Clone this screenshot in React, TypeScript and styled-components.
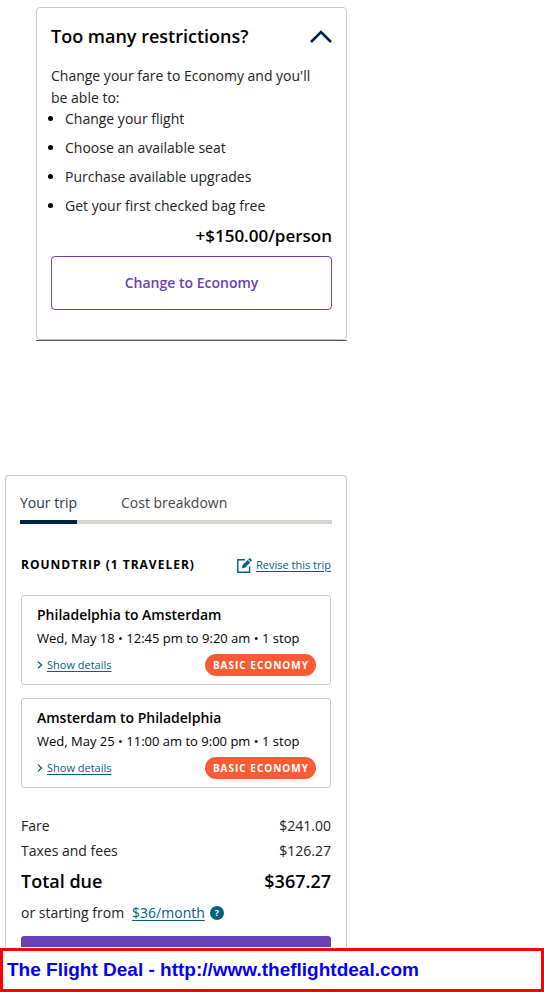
import React from "react";
import styled, { createGlobalStyle } from "styled-components";

const GlobalStyle = createGlobalStyle`
  *, *::before, *::after { box-sizing: border-box; }
  body {
    margin: 0;
    background: #fff;
    color: #222;
    font-family: "Open Sans", "Noto Sans", sans-serif;
    font-size: 14px;
    line-height: 22px;
  }
  h2, h3, p, ul, dl, dd { margin: 0; padding: 0; }
  button { font: inherit; cursor: pointer; }
`;

const Column = styled.main`
  width: 100%;
  max-width: 347px;
  padding: 7px 0 1px 5px;
`;

const OfferShell = styled.section`
  margin: 0 0 134px 31px;
  border-bottom: 1px solid #555;
`;

const OfferCard = styled.div`
  border: 1px solid #c8c8c8;
  border-radius: 4px;
  padding: 14px 14px 29px;
`;

const OfferHeader = styled.div`
  display: flex;
  align-items: center;
  justify-content: space-between;
  height: 28px;
  margin-bottom: 15px;
`;

const OfferTitle = styled.h2`
  color: #000;
  font-size: 18px;
  font-weight: 600;
`;

const CollapseButton = styled.button`
  display: flex;
  padding: 0;
  border: 0;
  background: none;
`;

const OfferText = styled.p`
  padding-right: 12px;
`;

const PerkList = styled.ul`
  padding-left: 14px;

  li { line-height: 20px; margin-bottom: 9px; }
  li::marker { color: #000; }
`;

const OfferPrice = styled.p`
  color: #000;
  font-size: 17px;
  font-weight: 600;
  text-align: right;
`;

const OutlineButton = styled.button`
  width: 100%;
  height: 54px;
  margin-top: 9px;
  border: 1px solid #6841b4;
  border-radius: 4px;
  background: #fff;
  color: #6841b4;
  font-weight: 600;
`;

const TripCard = styled.section`
  border: 1px solid #c8c8c8;
  border-bottom: 0;
  border-radius: 4px 4px 0 0;
  padding: 16px 14px 0;
`;

const Tabs = styled.div`
  display: flex;
  gap: 44px;
  border-bottom: 4px solid #d3d3cf;
`;

const Tab = styled.button<{ $active?: boolean }>`
  padding: 0 0 6px;
  margin-bottom: -4px;
  border: 0;
  border-bottom: 4px solid ${(p) => (p.$active ? "#002244" : "transparent")};
  background: none;
  color: ${(p) => (p.$active ? "#243746" : "#444")};
`;

const TripBody = styled.div`
  padding: 30px 1px 0;
`;

const TripHeader = styled.div`
  display: flex;
  align-items: center;
  justify-content: space-between;
  margin-bottom: 19px;
`;

const TripTitle = styled.h2`
  color: #000;
  font-size: 12px;
  font-weight: 700;
  letter-spacing: 1px;
`;

const TextLink = styled.a`
  color: #00627a;
  text-underline-offset: 2px;
`;

const SmallLink = styled(TextLink)`
  font-size: 11px;
`;

const IconLabel = styled.span`
  display: flex;
  align-items: center;
  gap: 4px;
`;

const Flight = styled.article`
  height: 90px;
  margin-bottom: 13px;
  padding: 8px 14px 0 15px;
  border: 1px solid #c8c8c8;
  border-radius: 3px;
`;

const FlightTitle = styled.h3`
  color: #000;
  font-size: 14px;
  font-weight: 600;
`;

const FlightInfo = styled.p`
  color: #000;
  font-size: 13px;
  line-height: 24px;
`;

const FlightFooter = styled.div`
  display: flex;
  align-items: center;
  justify-content: space-between;
  margin-top: 4px;
`;

const FareBadge = styled.span`
  padding: 0 7px 0 8px;
  border-radius: 11px;
  background: #f95c35;
  color: #fff;
  font-size: 10px;
  font-weight: 700;
  letter-spacing: 1px;
`;

const Costs = styled.dl`
  padding-top: 12px;
`;

const CostRow = styled.div<{ $total?: boolean }>`
  display: flex;
  justify-content: space-between;
  color: ${(p) => (p.$total ? "#000" : "#222")};
  font-size: ${(p) => (p.$total ? 18 : 14)}px;
  font-weight: ${(p) => (p.$total ? 600 : 400)};
  line-height: ${(p) => (p.$total ? 36 : 25)}px;
`;

const Monthly = styled.p`
  display: flex;
  align-items: center;
  gap: 8px;
  margin: 3px 0 12px;
`;

const HelpButton = styled.button`
  width: 14px;
  height: 14px;
  margin-left: -3px;
  padding: 0;
  border: 0;
  border-radius: 50%;
  background: #00627a;
  color: #fff;
  font-size: 9px;
  font-weight: 700;
  line-height: 14px;
`;

const ContinueButton = styled.button`
  display: block;
  width: 100%;
  height: 11px;
  padding: 0;
  border: 0;
  border-radius: 3px 3px 0 0;
  background: #6841b4;
`;

const SiteBanner = styled.footer`
  padding: 7px 4px;
  border: 3px solid #f00;
  background: #fff;
  font: bold 19px/24px "Liberation Sans", Arial, sans-serif;

  a { color: #00f; text-decoration: none; }
`;

const perks = [
  "Change your flight",
  "Choose an available seat",
  "Purchase available upgrades",
  "Get your first checked bag free",
];

const flights = [
  { route: "Philadelphia to Amsterdam", info: "Wed, May 18 • 12:45 pm to 9:20 am • 1 stop" },
  { route: "Amsterdam to Philadelphia", info: "Wed, May 25 • 11:00 am to 9:00 pm • 1 stop" },
];

const costs = [
  { label: "Fare", value: "$241.00" },
  { label: "Taxes and fees", value: "$126.27" },
  { label: "Total due", value: "$367.27", total: true },
];

const ChevronUp = () => (
  <svg width="22" height="13" viewBox="0 0 22 13" fill="none" aria-hidden="true">
    <path d="M1 12 11 2l10 10" stroke="#002244" strokeWidth="2.6" />
  </svg>
);

const ChevronRight = () => (
  <svg width="6" height="8" viewBox="0 0 6 8" fill="none" aria-hidden="true">
    <path d="m1 .7 3.6 3.3L1 7.3" stroke="#00627a" strokeWidth="1.2" />
  </svg>
);

const EditIcon = () => (
  <svg width="15" height="15" viewBox="0 0 15 15" fill="none" aria-hidden="true">
    <path d="M8 1.7H.8v12.5h11.8V8.5" stroke="#00627a" strokeWidth="1.4" />
    <path d="M4.8 10.5 5.7 7l5-5 2.5 2.5-5 5z" fill="#00627a" />
    <path d="m11.3 1.4 1-1q.5-.4 1 0l1.4 1.4q.4.5 0 1l-1 1z" fill="#00627a" />
  </svg>
);

export default function App() {
  return (
    <>
      <GlobalStyle />
      <Column>
        <OfferShell>
          <OfferCard>
            <OfferHeader>
              <OfferTitle>Too many restrictions?</OfferTitle>
              <CollapseButton type="button" aria-label="Collapse" aria-expanded="true">
                <ChevronUp />
              </CollapseButton>
            </OfferHeader>
            <OfferText>Change your fare to Economy and you'll be able to:</OfferText>
            <PerkList>
              {perks.map((perk) => (
                <li key={perk}>{perk}</li>
              ))}
            </PerkList>
            <OfferPrice>+$150.00/person</OfferPrice>
            <OutlineButton type="button">Change to Economy</OutlineButton>
          </OfferCard>
        </OfferShell>

        <TripCard>
          <Tabs role="tablist">
            <Tab type="button" role="tab" aria-selected="true" $active>
              Your trip
            </Tab>
            <Tab type="button" role="tab" aria-selected="false">
              Cost breakdown
            </Tab>
          </Tabs>
          <TripBody>
            <TripHeader>
              <TripTitle>ROUNDTRIP (1 TRAVELER)</TripTitle>
              <IconLabel>
                <EditIcon />
                <SmallLink href="#revise">Revise this trip</SmallLink>
              </IconLabel>
            </TripHeader>
            {flights.map((flight) => (
              <Flight key={flight.route}>
                <FlightTitle>{flight.route}</FlightTitle>
                <FlightInfo>{flight.info}</FlightInfo>
                <FlightFooter>
                  <IconLabel>
                    <ChevronRight />
                    <SmallLink href="#details">Show details</SmallLink>
                  </IconLabel>
                  <FareBadge>BASIC ECONOMY</FareBadge>
                </FlightFooter>
              </Flight>
            ))}
            <Costs>
              {costs.map((cost) => (
                <CostRow key={cost.label} $total={cost.total}>
                  <dt>{cost.label}</dt>
                  <dd>{cost.value}</dd>
                </CostRow>
              ))}
            </Costs>
            <Monthly>
              or starting from <TextLink href="#monthly">$36/month</TextLink>
              <HelpButton type="button">?</HelpButton>
            </Monthly>
            <ContinueButton type="button" aria-label="Continue" />
          </TripBody>
        </TripCard>
      </Column>
      <SiteBanner>
        <a href="http://www.theflightdeal.com">The Flight Deal - http://www.theflightdeal.com</a>
      </SiteBanner>
    </>
  );
}
